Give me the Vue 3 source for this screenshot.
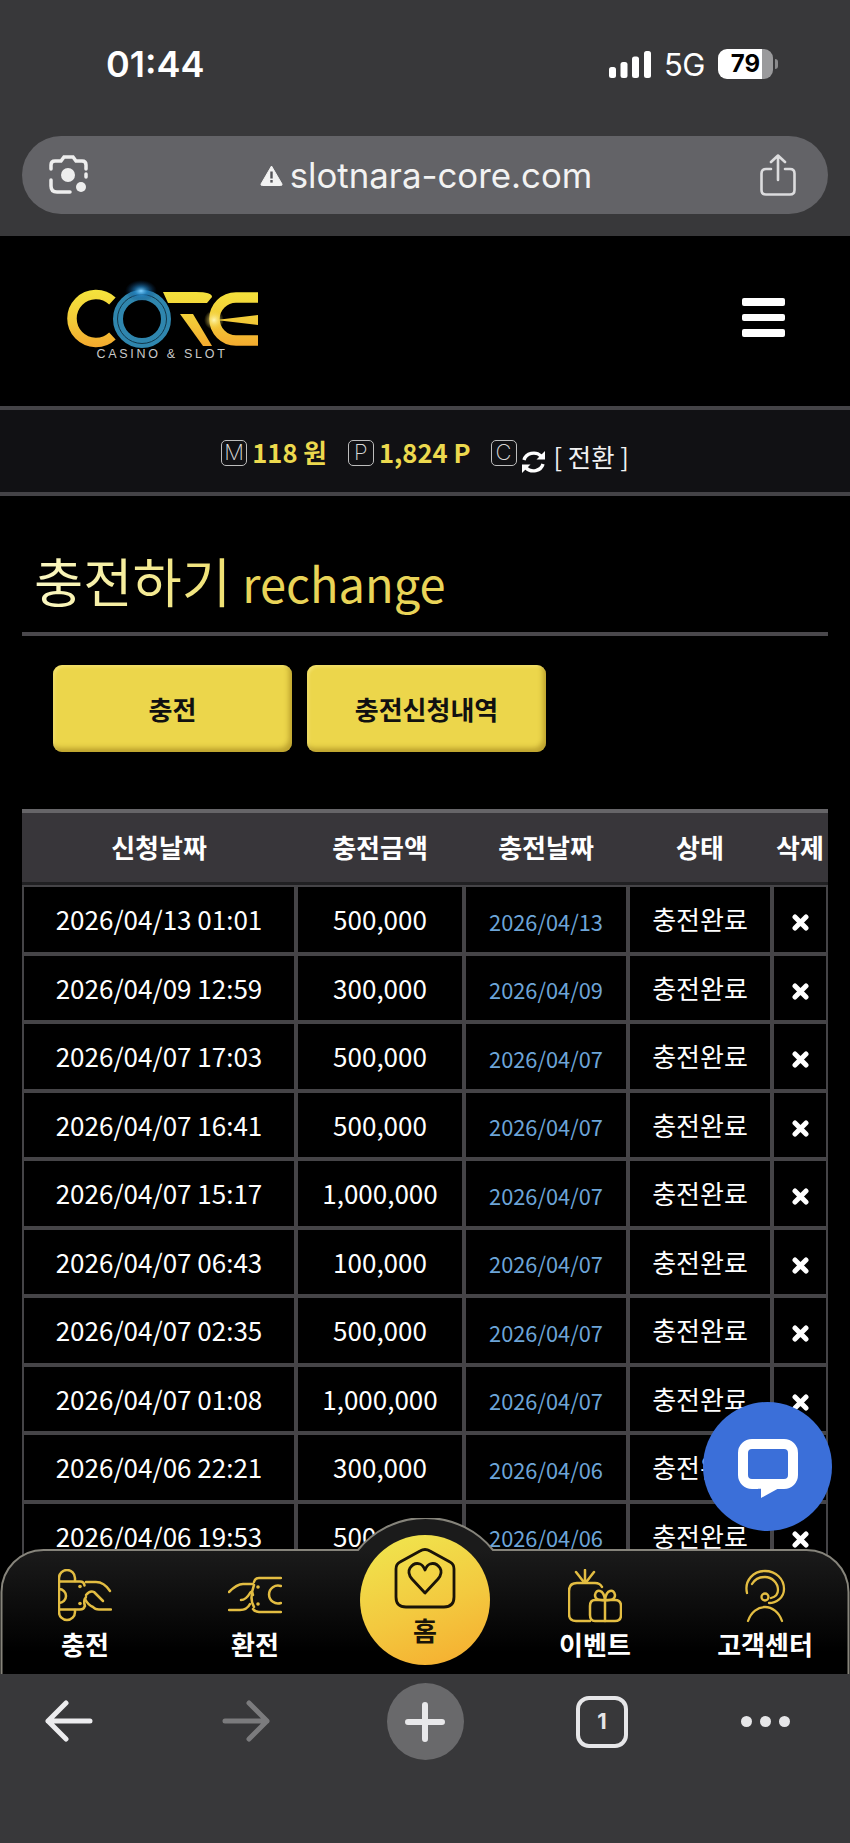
<script setup>
const rows = [
  { req: '2026/04/13 01:01', amount: '500,000', date: '2026/04/13' },
  { req: '2026/04/09 12:59', amount: '300,000', date: '2026/04/09' },
  { req: '2026/04/07 17:03', amount: '500,000', date: '2026/04/07' },
  { req: '2026/04/07 16:41', amount: '500,000', date: '2026/04/07' },
  { req: '2026/04/07 15:17', amount: '1,000,000', date: '2026/04/07' },
  { req: '2026/04/07 06:43', amount: '100,000', date: '2026/04/07' },
  { req: '2026/04/07 02:35', amount: '500,000', date: '2026/04/07' },
  { req: '2026/04/07 01:08', amount: '1,000,000', date: '2026/04/07' },
  { req: '2026/04/06 22:21', amount: '300,000', date: '2026/04/06' },
  { req: '2026/04/06 19:53', amount: '500,000', date: '2026/04/06' },
]
const heads = ['신청날짜', '충전금액', '충전날짜', '상태', '삭제']
</script>

<template>
  <div class="phone">
    <div class="topbar">
      <div class="status">
        <span class="time">01:44</span>
        <div class="status-right">
          <svg class="signal" width="42" height="27" viewBox="0 0 42 27">
            <rect x="0" y="16" width="7" height="11" rx="2.5" />
            <rect x="11.5" y="11" width="7" height="16" rx="2.5" />
            <rect x="23" y="5.5" width="7" height="21.5" rx="2.5" />
            <rect x="35" y="0" width="7" height="27" rx="2.5" />
          </svg>
          <span class="net">5G</span>
          <div class="battery"><span>79</span></div>
          <i class="battery-tip"></i>
        </div>
      </div>
      <div class="address">
        <svg class="lens" width="42" height="42" viewBox="0 0 42 42" fill="none" stroke="#eeeeee" stroke-width="3.5" stroke-linecap="round">
          <path d="M3 15 V11 q0-4 4-4 h6 l3-4 h9 l3 4 h6 q4 0 4 4 v4" />
          <path d="M3 26 v6 q0 6 6 6 h13" />
          <path d="M38 20 v3" />
          <circle cx="20" cy="21" r="7" fill="#eeeeee" stroke="none" />
          <circle cx="33" cy="33" r="5" fill="#eeeeee" stroke="none" />
        </svg>
        <div class="url">
          <svg width="23" height="21" viewBox="0 0 23 21">
            <path d="M11.5 1 L22 19 q0.5 1.500-1.500 1.500 H2.500 q-2 0-1.500-1.500 Z" fill="#f2f2f2" stroke="#f2f2f2" stroke-linejoin="round" />
            <rect x="10.300" y="6.500" width="2.400" height="7" fill="#55555a" />
            <rect x="10.300" y="15" width="2.400" height="2.600" fill="#55555a" />
          </svg>
          <span>slotnara-core.com</span>
        </div>
        <svg class="share" width="36" height="42" viewBox="0 0 36 42" fill="none" stroke="#dcdcde" stroke-width="2.600" stroke-linecap="round" stroke-linejoin="round">
          <path d="M18 26 V2 M11 8 L18 1.500 L25 8" />
          <path d="M11 15 H6 q-4.500 0-4.500 4.500 V36 q0 4.500 4.500 4.500 H30 q4.500 0 4.500-4.500 V19.500 q0-4.500-4.500-4.500 H25" />
        </svg>
      </div>
    </div>

    <div class="main">
      <header class="head">
        <svg class="logo" width="205" height="95" viewBox="60 270 205 95">
          <defs>
            <linearGradient id="gold" gradientUnits="userSpaceOnUse" x1="0" y1="290" x2="0" y2="348">
              <stop offset="0" stop-color="#f4e33c" />
              <stop offset="0.55" stop-color="#f2c938" />
              <stop offset="1" stop-color="#f4a82d" />
            </linearGradient>
            <radialGradient id="flare">
              <stop offset="0" stop-color="#7fd0ff" />
              <stop offset="0.4" stop-color="#1f7fc0" stop-opacity="0.7" />
              <stop offset="1" stop-color="#0a3a70" stop-opacity="0" />
            </radialGradient>
            <radialGradient id="spark">
              <stop offset="0" stop-color="#fff6b0" />
              <stop offset="1" stop-color="#f4d23c" stop-opacity="0" />
            </radialGradient>
          </defs>
          <path d="M112.400 301 A24 24 0 1 0 112.400 336" fill="none" stroke="url(#gold)" stroke-width="9.500" />
          <path d="M163 292 H196 Q212 292 212 297 L207 303 H168 Z" fill="url(#gold)" />
          <path d="M180 314 L193 314 L212 346 L203 346 Z" fill="url(#gold)" />
          <path d="M258 297.500 H236 A21 21 0 0 0 236 340.500 H258" fill="none" stroke="url(#gold)" stroke-width="10.500" />
          <path d="M216 320 L258 315 V325 Z" fill="url(#gold)" />
          <circle cx="142" cy="319" r="24" fill="#000" stroke="#2f86ae" stroke-width="10" />
          <circle cx="142" cy="319" r="24.500" fill="none" stroke="#12384c" stroke-width="1" />
          <ellipse cx="141" cy="291" rx="16" ry="11" fill="url(#flare)" />
          <circle cx="214" cy="320" r="10" fill="url(#spark)" />
          <text class="logo-sub" x="162" y="358" text-anchor="middle">CASINO &amp; SLOT</text>
        </svg>
        <div class="burger"><i></i><i></i><i></i></div>
      </header>

      <div class="balance">
        <span class="tag">M</span><b class="val">118 원</b>
        <span class="tag tag2">P</span><b class="val">1,824 P</b>
        <span class="tag tag3">C</span>
        <svg class="refresh" width="25" height="24" viewBox="0 0 25 24" fill="none" stroke="#fff" stroke-width="3.400">
          <path d="M3 10 A10 9 0 0 1 20 6" />
          <path d="M22 14 A10 9 0 0 1 5 18" />
          <path d="M24 1 V9.500 H15.500 Z" fill="#fff" stroke="none" />
          <path d="M1 23 V14.500 H9.500 Z" fill="#fff" stroke="none" />
        </svg>
        <span class="swap">[ 전환 ]</span>
      </div>

      <h2 class="title"><span class="ko">충전하기</span> <span class="en">rechange</span></h2>

      <div class="tabs">
        <button class="tab">충전</button>
        <button class="tab">충전신청내역</button>
      </div>

      <div class="table">
        <div class="thead">
          <div v-for="h in heads" :key="h">{{ h }}</div>
        </div>
        <div v-for="r in rows" :key="r.req" class="row">
          <div>{{ r.req }}</div>
          <div>{{ r.amount }}</div>
          <div class="blue">{{ r.date }}</div>
          <div>충전완료</div>
          <div>
            <svg class="del" width="17" height="17" viewBox="0 0 17 17" stroke="#fff" stroke-width="5" stroke-linecap="round">
              <path d="M3 3 L14 14 M14 3 L3 14" />
            </svg>
          </div>
        </div>
      </div>

      <button class="chat">
        <svg width="62" height="62" viewBox="0 0 62 62" fill="none">
          <rect x="6" y="8" width="50" height="40" rx="9" stroke="#fff" stroke-width="10" />
          <path d="M24 45 V62 L44 51 V45 Z" fill="#fff" />
          <path d="M21 53.500 H24" stroke="#3b6fd9" stroke-width="1.500" />
        </svg>
      </button>

      <nav class="nav">
        <svg class="nav-bg" width="850" height="156" viewBox="0 0 850 156">
          <defs>
            <linearGradient id="navfill" x1="0" y1="0" x2="0" y2="1">
              <stop offset="0.2" stop-color="#1b1b1b" />
              <stop offset="0.85" stop-color="#000" />
            </linearGradient>
          </defs>
          <path d="M1.500 158 V74 A42 42 0 0 1 43.500 32 H358 A87 87 0 0 1 493 32 H806.500 A42 42 0 0 1 848.500 74 V158 Z" fill="url(#navfill)" stroke="#86847b" stroke-width="2" />
        </svg>
        <div class="nav-item">
          <svg class="ico" width="54" height="54" viewBox="0 0 54 54" fill="none" stroke="#e3bd42" stroke-width="2.500" stroke-linecap="round" stroke-linejoin="round">
            <path d="M1 13 V9 a8 8 0 0 1 16 0 V12" />
            <path d="M1 13 V43 a8 8 0 0 0 16 0 V41" />
            <path d="M1 12.500 H22 q4 0 4.500 4" />
            <path d="M1 40.500 H22 q4 0 4.500-3" />
            <path d="M1 20 a7 7 0 0 1 0 14" />
            <path d="M28 13 H38 q8 0 14 9" />
            <path d="M27 30 q3 6 8 8 q2 2.500 6 2.500 H53" />
            <path d="M28 26 q4-5 8-3 l9 9" />
            <path d="M27 37 q-2-5 1-9" />
            <circle cx="22" cy="17.500" r="1.800" fill="#e3bd42" stroke="none" />
            <circle cx="22" cy="34.500" r="1.800" fill="#e3bd42" stroke="none" />
          </svg>
          <span>충전</span>
        </div>
        <div class="nav-item">
          <svg class="ico" width="54" height="54" viewBox="0 0 54 54" fill="none" stroke="#e3bd42" stroke-width="2.500" stroke-linecap="round" stroke-linejoin="round">
            <path d="M53 9 H31 q-4 0-5 4" />
            <path d="M53 43 H31 q-4 0-6-3" />
            <path d="M53 17 a9 9 0 1 0 0 17" />
            <path d="M1 23 q8-8 14-8 H25" />
            <path d="M1 41 H12 q7 0 10-6" />
            <path d="M13 31 q5 0 9-7 q2-3 3 2" />
            <path d="M26 38 q-5-8 0-22" />
            <circle cx="30" cy="18" r="1.800" fill="#e3bd42" stroke="none" />
            <circle cx="30" cy="35" r="1.800" fill="#e3bd42" stroke="none" />
          </svg>
          <span>환전</span>
        </div>
        <div class="home">
          <svg width="62" height="62" viewBox="0 0 62 62" fill="none" stroke="#1a1408" stroke-width="2.800" stroke-linejoin="round">
            <path d="M26 4 Q31 1 36 4 L56 15 Q60 17 60 22 V50 Q60 60 50 60 H12 Q2 60 2 50 V22 Q2 17 6 15 Z" />
            <path d="M31 46 L18 32 Q13 26 16 21 Q20 15 26 17 Q29 18 31 23 Q33 18 36 17 Q42 15 46 21 Q49 26 44 32 Z" />
          </svg>
          <span>홈</span>
        </div>
        <div class="nav-item">
          <svg class="ico" width="54" height="54" viewBox="0 0 54 54" fill="none" stroke="#e3bd42" stroke-width="2.500" stroke-linecap="round" stroke-linejoin="round">
            <path d="M34 18 q-2-4-7-4 H9 q-8 0-8 8 V45 q0 7 7 7 H22" />
            <path d="M17 1 V12 M8 3 L15 12 M26 3 L19 12" />
            <path d="M22 37 q0-6 5-6 H47 q6 0 6 6 V46 q0 6-6 6 H27 q-5 0-5-6 Z" />
            <path d="M37 31 V52" />
            <path d="M37 31 q-10 1-10-5 q1-5 5-4 q4 1 5 9 q1-8 5-9 q4-1 5 4 q0 6-10 5" />
          </svg>
          <span>이벤트</span>
        </div>
        <div class="nav-item">
          <svg class="ico" width="54" height="54" viewBox="0 0 54 54" fill="none" stroke="#e3bd42" stroke-width="2.300" stroke-linecap="round" stroke-linejoin="round">
            <path d="M9 24 C6 11 16 2 27 2 C38 2 46 10 46 20 C46 29 38 34 31 34" />
            <path d="M14 15 C17 10 22 8 27 8 C34 8 40 14 40 21 C40 25 37 28 33 29" />
            <circle cx="27" cy="28" r="3.500" />
            <path d="M10 52 C13 43 20 38 27 38 C34 38 41 43 44 52" />
          </svg>
          <span>고객센터</span>
        </div>
      </nav>
    </div>

    <div class="bottombar">
      <svg width="50" height="42" viewBox="0 0 50 42" fill="none" stroke="#ececee" stroke-width="5" stroke-linecap="round" stroke-linejoin="round">
        <path d="M46 21 H4 M22 3 L4 21 L22 39" />
      </svg>
      <svg width="50" height="42" viewBox="0 0 50 42" fill="none" stroke="#7b7b7d" stroke-width="5" stroke-linecap="round" stroke-linejoin="round">
        <path d="M4 21 H46 M28 3 L46 21 L28 39" />
      </svg>
      <div class="plus">
        <svg width="40" height="40" viewBox="0 0 40 40" stroke="#e8e8ea" stroke-width="6" stroke-linecap="round">
          <path d="M20 3 V37 M3 20 H37" />
        </svg>
      </div>
      <div class="tabcount">1</div>
      <div class="dots"><i></i><i></i><i></i></div>
    </div>
  </div>
</template>

<style scoped>
* {
  box-sizing: border-box;
}

.phone {
  width: 850px;
  height: 1843px;
  display: flex;
  flex-direction: column;
  overflow: hidden;
  background: #000;
  color: #fff;
  font-family: "Noto Sans CJK KR", "Noto Sans", sans-serif;
}

.topbar {
  height: 236px;
  flex: none;
  background: #38383a;
  padding: 46px 22px 0;
}

.status {
  height: 36px;
  display: flex;
  align-items: center;
  justify-content: space-between;
  padding: 0 50px 0 84px;
  font-family: Inter, sans-serif;
}

.time {
  font-size: 36px;
  font-weight: 600;
}

.status-right {
  display: flex;
  align-items: center;
}

.signal {
  fill: #fff;
}

.net {
  font-size: 31px;
  font-weight: 400;
  margin-left: 13px;
  letter-spacing: -0.500px;
}

.battery {
  width: 55px;
  height: 30px;
  margin-left: 13px;
  border-radius: 9px;
  background: linear-gradient(90deg, #fff 0 80%, #9a9a9c 80%);
  color: #000;
  font-size: 24px;
  font-weight: 700;
  line-height: 30px;
  text-align: center;
}

.battery-tip {
  width: 3px;
  height: 10px;
  margin-left: 2px;
  border-radius: 0 3px 3px 0;
  background: #8a8a8c;
}

.address {
  height: 78px;
  margin-top: 54px;
  border-radius: 39px;
  background: #636367;
  display: flex;
  align-items: center;
  justify-content: space-between;
  padding: 0 32px 0 26px;
}

.url {
  display: flex;
  align-items: center;
  gap: 7px;
  font-family: Inter, sans-serif;
  font-size: 34.800px;
  color: #f2f2f2;
  margin-left: 2px;
}

.main {
  position: relative;
  flex: 1;
  overflow: hidden;
  background: #000;
}

.head {
  height: 170px;
  display: flex;
  justify-content: space-between;
  padding: 34px 65px 0 60px;
}

.logo-sub {
  fill: #c9c9c9;
  font-family: "Liberation Sans", sans-serif;
  font-size: 12.500px;
  letter-spacing: 2.700px;
}

.burger {
  width: 43px;
  margin-top: 28px;
  display: flex;
  flex-direction: column;
  gap: 8px;
}

.burger i {
  height: 7.500px;
  border-radius: 2px;
  background: #fff;
}

.balance {
  height: 90px;
  border-top: 4px solid #444347;
  border-bottom: 4px solid #444347;
  background: #111114;
  display: flex;
  align-items: center;
  justify-content: center;
}

.tag {
  width: 26px;
  height: 26px;
  border: 1.500px solid #bdbdbd;
  border-radius: 5px;
  color: #d8d8d8;
  font-family: Inter, sans-serif;
  font-size: 22px;
  font-weight: 200;
  line-height: 23px;
  text-align: center;
  margin-top: 3px;
  margin-right: 5px;
}

.tag2 {
  margin-left: 21px;
}

.tag3 {
  margin-left: 20px;
}

.val {
  color: #ecd94e;
  font-size: 25.600px;
  font-weight: 700;
  margin-top: 1px;
}

.refresh {
  margin: 22px 8px 0 -1px;
}

.swap {
  font-size: 25.400px;
  margin-top: 9px;
  color: #f2f2f2;
}

.title {
  height: 140px;
  margin: 0 22px;
  padding: 48px 0 0 12px;
  border-bottom: 4px solid #4a484c;
  font-weight: 400;
  line-height: 72px;
  white-space: nowrap;
}

.ko {
  font-size: 53.500px;
  background: linear-gradient(90deg, #fbf8c4, #efe070);
  -webkit-background-clip: text;
  background-clip: text;
  color: transparent;
}

.en {
  font-size: 47px;
  color: #e9d458;
  margin-left: 6px;
}

.tabs {
  display: flex;
  gap: 15px;
  margin: 29px 0 57px 53px;
}

.tab {
  width: 239px;
  height: 87px;
  border: 0;
  border-radius: 9px;
  background: #ecd64b;
  box-shadow: inset -3px -4px 5px rgba(130, 100, 10, 0.45), inset 2px 2px 3px rgba(255, 245, 160, 0.4);
  color: #111;
  font-family: inherit;
  font-size: 26px;
  font-weight: 700;
}

.table {
  margin: 0 22px;
  width: 806px;
}

.thead,
.row {
  display: grid;
  grid-template-columns: 274px 168px 164px 144px 56px;
  font-size: 26px;
  text-align: center;
}

.thead {
  height: 76px;
  border-top: 4px solid #666568;
  border-bottom: 3px solid #202022;
  background: #38363a;
  font-weight: 700;
  line-height: 68px;
  white-space: nowrap;
}

.thead > div:last-child {
  margin: 0 -4px;
}

.row {
  height: 68.500px;
}

.row > div {
  display: flex;
  align-items: center;
  justify-content: center;
  border: 2px solid #454447;
  padding-bottom: 1px;
}

.row .blue {
  color: #6da5d8;
  font-size: 21.800px;
  padding: 4px 0 0;
}

.del {
  margin-top: 8px;
}

.chat {
  position: absolute;
  top: 1166px;
  right: 18px;
  z-index: 3;
  width: 129px;
  height: 129px;
  border: 0;
  border-radius: 50%;
  background: #3b6fd9;
  padding: 0;
  display: flex;
  align-items: center;
  justify-content: center;
}

.nav {
  position: absolute;
  left: 0;
  right: 0;
  bottom: 0;
  height: 156px;
  z-index: 2;
  display: grid;
  grid-template-columns: repeat(5, 170px);
}

.nav-bg {
  position: absolute;
  left: 0;
  top: 0;
}

.nav-item {
  position: relative;
  display: flex;
  flex-direction: column;
  align-items: center;
  padding-top: 51px;
  font-size: 26px;
  font-weight: 700;
  line-height: 36px;
}

.ico {
  margin-bottom: 3px;
  flex: none;
}

.home {
  position: relative;
  width: 130px;
  height: 130px;
  margin: 17px 0 0 20px;
  border-radius: 50%;
  background: linear-gradient(160deg, #f0e24c 10%, #f3c93f 55%, #f6ab2e 100%);
  display: flex;
  flex-direction: column;
  align-items: center;
  padding-top: 12px;
  color: #1a1408;
  font-size: 26px;
  font-weight: 700;
  line-height: 34px;
}

.home span {
  margin-top: 4px;
}

.bottombar {
  height: 169px;
  flex: none;
  background: #38383a;
  display: grid;
  grid-template-columns: 170px 170px 170px 170px 170px;
  justify-items: center;
  align-items: start;
  padding-top: 9px;
  position: relative;
}

.bottombar > svg {
  margin-top: 17px;
}

.bottombar > svg:first-child {
  margin-left: -33px;
}

.bottombar > svg:nth-child(2) {
  margin-left: -18px;
}

.plus {
  width: 77px;
  height: 77px;
  border-radius: 50%;
  background: #69696b;
  display: flex;
  align-items: center;
  justify-content: center;
}

.tabcount {
  width: 52px;
  height: 52px;
  margin-top: 13px;
  margin-left: 14px;
  border: 4.500px solid #e6e6e8;
  border-radius: 13px;
  color: #e6e6e8;
  font-family: Inter, sans-serif;
  font-size: 22px;
  font-weight: 700;
  line-height: 43px;
  text-align: center;
}

.dots {
  display: flex;
  gap: 8px;
  margin-top: 33px;
}

.dots i {
  width: 11px;
  height: 11px;
  border-radius: 50%;
  background: #e6e6e8;
}
</style>

<style>
body {
  background: #000;
}
</style>
